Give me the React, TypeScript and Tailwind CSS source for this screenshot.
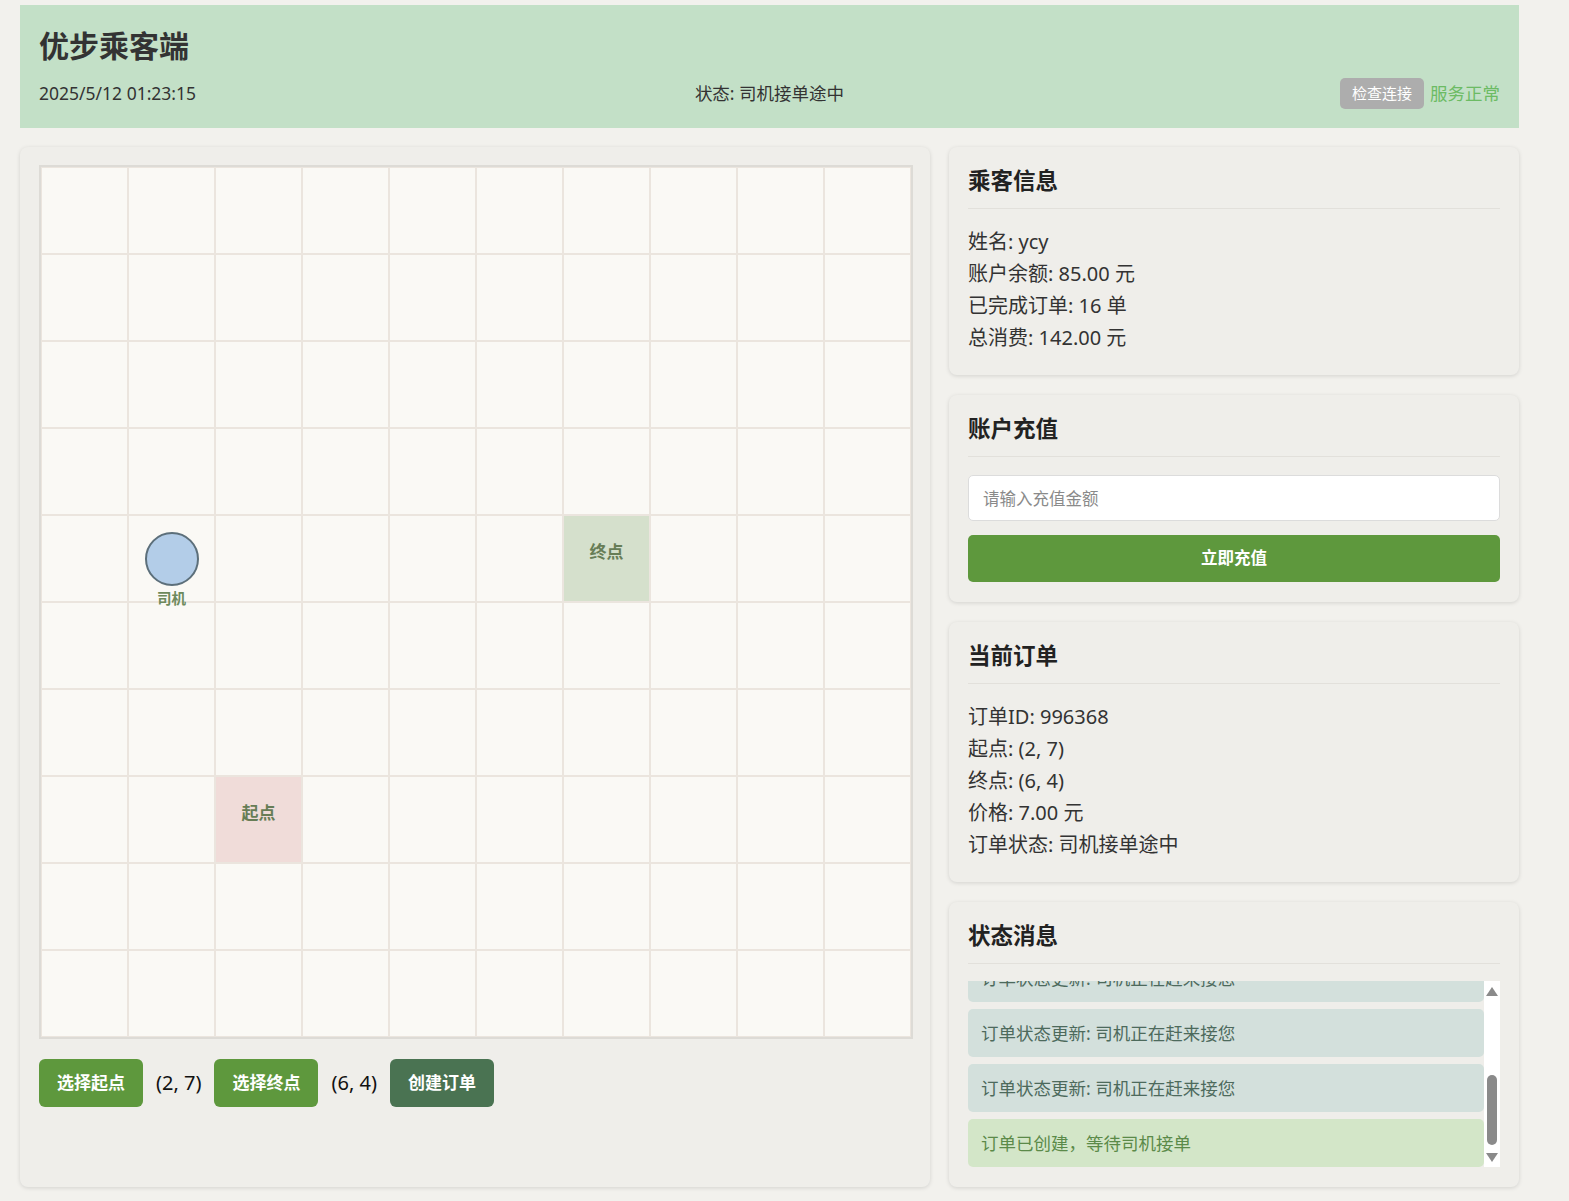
import React, { useLayoutEffect, useRef } from "react";

const GRID = 10;
const start = { x: 2, y: 7 };
const end = { x: 6, y: 4 };
const driver = { x: 1, y: 4 };

const messages = [
  { text: "订单状态更新: 司机正在赶来接您", kind: "info" },
  { text: "订单状态更新: 司机正在赶来接您", kind: "info" },
  { text: "订单状态更新: 司机正在赶来接您", kind: "info" },
  { text: "订单状态更新: 司机正在赶来接您", kind: "info" },
  { text: "订单状态更新: 司机正在赶来接您", kind: "info" },
  { text: "订单状态更新: 司机正在赶来接您", kind: "info" },
  { text: "订单已创建，等待司机接单", kind: "success" },
];

const Card = ({ title, children, className = "" }: { title: string; children: React.ReactNode; className?: string }) => (
  <div className={`rounded-[8px] bg-[#efeeea] shadow-[0_1px_4px_rgba(0,0,0,0.13)] px-[19px] pt-[19px] ${className}`}>
    <h2 className="text-[22.5px] font-bold leading-[30px] text-[#222] pb-[12px] border-b border-[#e2e0db] mb-[17px]">
      {title}
    </h2>
    {children}
  </div>
);

const MapGrid = () => {
  const cells = [];
  for (let y = 0; y < GRID; y++) {
    for (let x = 0; x < GRID; x++) {
      const isStart = x === start.x && y === start.y;
      const isEnd = x === end.x && y === end.y;
      const isDriver = x === driver.x && y === driver.y;
      cells.push(
        <div
          key={`${x}-${y}`}
          className={`relative w-[87px] h-[87px] border border-[#ebe5de] flex items-center justify-center ${
            isStart ? "bg-[#f0dcd9]" : isEnd ? "bg-[#d5e0cc]" : "bg-[#faf9f5]"
          }`}
        >
          {isStart && <span className="pb-[14px] text-[17px] font-bold text-[#677d56]">起点</span>}
          {isEnd && <span className="pb-[14px] text-[17px] font-bold text-[#677d56]">终点</span>}
          {isDriver && (
            <>
              <div className="w-[54px] h-[54px] rounded-full bg-[#b3cde8] border-2 border-[#5c6f7a]" />
              <span className="absolute z-10 top-[72px] left-1/2 -translate-x-1/2 whitespace-nowrap text-[14.5px] font-bold text-[#6d8a5c]">
                司机
              </span>
            </>
          )}
        </div>
      );
    }
  }
  return <div className="grid grid-cols-[repeat(10,87px)] border-2 border-[#dddbd6] w-fit">{cells}</div>;
};

// drawn scrollbar beside the message list
const ScrollBar = () => (
  <div className="relative w-[16px] shrink-0 bg-white">
    <svg className="absolute left-[2px] top-[6px]" width="12" height="9" viewBox="0 0 12 9">
      <path d="M6 0 L12 9 L0 9 Z" fill="#8a8a8a" />
    </svg>
    <div className="absolute left-[3px] top-[94px] w-[10px] h-[70px] rounded-full bg-[#8a8a8a]" />
    <svg className="absolute left-[2px] bottom-[5px]" width="12" height="9" viewBox="0 0 12 9">
      <path d="M0 0 L12 0 L6 9 Z" fill="#8a8a8a" />
    </svg>
  </div>
);

export default function App() {
  const logRef = useRef<HTMLDivElement>(null);
  useLayoutEffect(() => {
    if (logRef.current) logRef.current.scrollTop = logRef.current.scrollHeight;
  }, []);

  return (
    <div className="min-h-screen bg-[#f2f1ed] pt-[5px] px-[20px] pb-[12px] font-['Noto_Sans','Noto_Sans_CJK_SC',sans-serif] text-[#333]">
      {/* Header */}
      <header className="w-[1499px] bg-[#c3e0c7] px-[19px] pt-[23px] pb-[19px]">
        <h1 className="text-[30px] font-bold leading-[36px] text-[#333]">优步乘客端</h1>
        <div className="mt-[14px] grid grid-cols-3 items-center h-[31px] text-[17.5px]">
          <span>2025/5/12 01:23:15</span>
          <span className="text-center">状态: 司机接单途中</span>
          <div className="flex items-center justify-end gap-[6px]">
            <button className="h-[31px] px-[12px] rounded-[5px] bg-[#adadad] text-white text-[15px]">检查连接</button>
            <span className="text-[#6cbb64]">服务正常</span>
          </div>
        </div>
      </header>

      <div className="mt-[19px] flex items-stretch gap-[19px] w-[1499px]">
        {/* Map */}
        <div className="w-[910px] rounded-[8px] bg-[#efeeea] shadow-[0_1px_4px_rgba(0,0,0,0.13)] pl-[19px] pr-[17px] pt-[18px]">
          <MapGrid />
          <div className="mt-[20px] flex items-center gap-[13px]">
            <button className="h-[48px] px-[18px] rounded-[6px] bg-[#5e983d] text-white text-[17px] font-semibold">选择起点</button>
            <span className="text-[20px] text-[#111]">(2, 7)</span>
            <button className="h-[48px] px-[18px] rounded-[6px] bg-[#5e983d] text-white text-[17px] font-semibold">选择终点</button>
            <span className="text-[20px] text-[#111]">(6, 4)</span>
            <button className="h-[48px] px-[18px] rounded-[6px] bg-[#4a7352] text-white text-[17px] font-semibold">创建订单</button>
          </div>
        </div>

        {/* Side panel */}
        <div className="w-[570px] flex flex-col gap-[20px]">
          <Card title="乘客信息" className="pb-[21px]">
            <div className="text-[20px] leading-[32px]">
              <p>姓名: ycy</p>
              <p>账户余额: 85.00 元</p>
              <p>已完成订单: 16 单</p>
              <p>总消费: 142.00 元</p>
            </div>
          </Card>

          <Card title="账户充值" className="pb-[20px]">
            <input
              type="text"
              placeholder="请输入充值金额"
              className="mt-[1px] w-full h-[46px] rounded-[5px] border border-[#dcdcdc] bg-white px-[14px] text-[16.5px] placeholder:text-[#8a8a8a] outline-none"
            />
            <button className="mt-[14px] w-full h-[47px] rounded-[5px] bg-[#5e983d] text-white text-[16.5px] font-semibold">
              立即充值
            </button>
          </Card>

          <Card title="当前订单" className="pb-[21px]">
            <div className="text-[20px] leading-[32px]">
              <p>订单ID: 996368</p>
              <p>起点: (2, 7)</p>
              <p>终点: (6, 4)</p>
              <p>价格: 7.00 元</p>
              <p>订单状态: 司机接单途中</p>
            </div>
          </Card>

          <Card title="状态消息" className="pb-[20px]">
            <div className="mt-[1px] h-[186px] flex">
              <div
                ref={logRef}
                className="flex-1 overflow-y-auto flex flex-col gap-[7px] [scrollbar-width:none]"
              >
                {messages.map((m, i) => (
                  <div
                    key={i}
                    className={`shrink-0 h-[48px] flex items-center px-[13px] rounded-[5px] text-[17.5px] ${
                      m.kind === "success" ? "bg-[#d3e6c8] text-[#5b8a49]" : "bg-[#d3e0dc] text-[#4d6a5c]"
                    }`}
                  >
                    {m.text}
                  </div>
                ))}
              </div>
              <ScrollBar />
            </div>
          </Card>
        </div>
      </div>
    </div>
  );
}
